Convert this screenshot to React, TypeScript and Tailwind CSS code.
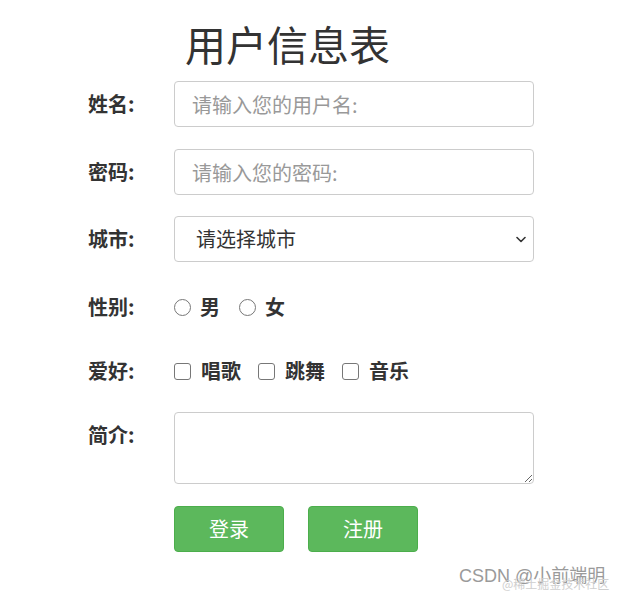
import React from "react";

export default function App() {
  return (
    <div className="relative w-[624px] h-[598px] bg-white text-[#333] font-['Noto_Sans_CJK_SC','Microsoft_YaHei',sans-serif]">
      <div className="pl-[88px] pt-[18px]">
        <h1 className="ml-[97px] h-[50px] text-[41px] leading-[50px] font-normal">用户信息表</h1>

        <div className="mt-[13px] flex items-center">
          <label className="w-[86px] text-[20px] font-bold leading-[24px]">姓名:</label>
          <input
            type="text"
            placeholder="请输入您的用户名:"
            className="w-[360px] h-[46px] border border-[#ccc] rounded-[4px] px-[17px] text-[20px] text-[#333] placeholder:text-[#999] outline-none"
          />
        </div>

        <div className="mt-[22px] flex items-center">
          <label className="w-[86px] text-[20px] font-bold leading-[24px]">密码:</label>
          <input
            type="password"
            placeholder="请输入您的密码:"
            className="w-[360px] h-[46px] border border-[#ccc] rounded-[4px] px-[17px] text-[20px] text-[#333] placeholder:text-[#999] outline-none"
          />
        </div>

        <div className="mt-[21px] flex items-center">
          <label className="w-[86px] text-[20px] font-bold leading-[24px]">城市:</label>
          <div className="relative w-[360px] h-[46px]">
            <select className="appearance-none w-full h-full border border-[#ccc] rounded-[4px] pl-[21px] pr-[30px] text-[20px] text-[#333] bg-white outline-none">
              <option>请选择城市</option>
              <option>北京</option>
              <option>上海</option>
              <option>广州</option>
            </select>
            <svg
              className="pointer-events-none absolute right-[8px] top-[20px]"
              width="10"
              height="7"
              viewBox="0 0 10 7"
              fill="none"
            >
              <path d="M1 1.5 L5 5.5 L9 1.5" stroke="#333" strokeWidth="1.6" strokeLinecap="round" strokeLinejoin="round" />
            </svg>
          </div>
        </div>

        <div className="mt-[33px] flex items-center h-[24px]">
          <label className="w-[86px] text-[20px] font-bold leading-[24px]">性别:</label>
          <div className="flex items-center">
            <input type="radio" name="sex" className="appearance-none w-[17px] h-[17px] rounded-full border border-[#777] bg-white m-0" />
            <span className="ml-[9px] mr-[19px] text-[20px] font-bold leading-[24px]">男</span>
            <input type="radio" name="sex" className="appearance-none w-[17px] h-[17px] rounded-full border border-[#777] bg-white m-0" />
            <span className="ml-[9px] text-[20px] font-bold leading-[24px]">女</span>
          </div>
        </div>

        <div className="mt-[40px] flex items-center h-[24px]">
          <label className="w-[86px] text-[20px] font-bold leading-[24px]">爱好:</label>
          <div className="flex items-center">
            <input type="checkbox" className="appearance-none w-[17px] h-[17px] rounded-[3px] border border-[#777] bg-white m-0" />
            <span className="ml-[10px] mr-[17px] text-[20px] font-bold leading-[24px]">唱歌</span>
            <input type="checkbox" className="appearance-none w-[17px] h-[17px] rounded-[3px] border border-[#777] bg-white m-0" />
            <span className="ml-[10px] mr-[17px] text-[20px] font-bold leading-[24px]">跳舞</span>
            <input type="checkbox" className="appearance-none w-[17px] h-[17px] rounded-[3px] border border-[#777] bg-white m-0" />
            <span className="ml-[10px] text-[20px] font-bold leading-[24px]">音乐</span>
          </div>
        </div>

        <div className="mt-[29px] flex items-start">
          <label className="w-[86px] pt-[11px] text-[20px] font-bold leading-[24px]">简介:</label>
          <textarea className="block w-[360px] h-[72px] border border-[#ccc] rounded-[4px] px-[12px] py-[6px] text-[18px] outline-none" />
        </div>

        <div className="mt-[22px] ml-[86px] flex items-center gap-[24px]">
          <button className="w-[110px] h-[46px] rounded-[4px] bg-[#5cb85c] border border-[#4cae4c] text-white text-[20px] leading-[24px]">
            登录
          </button>
          <button className="w-[110px] h-[46px] rounded-[4px] bg-[#5cb85c] border border-[#4cae4c] text-white text-[20px] leading-[24px]">
            注册
          </button>
        </div>
      </div>

      <div className="absolute left-[459px] top-[565px] text-[18px] leading-[22px] text-[#9a9a9a] font-['Liberation_Sans','Noto_Sans_CJK_SC',sans-serif] whitespace-nowrap">
        CSDN @小前端明
      </div>
      <div className="absolute left-[502px] top-[577px] text-[12px] leading-[14px] text-[#cfcfcf] font-['Noto_Sans_CJK_SC',sans-serif] whitespace-nowrap">
        @稀土掘金技术社区
      </div>
    </div>
  );
}
